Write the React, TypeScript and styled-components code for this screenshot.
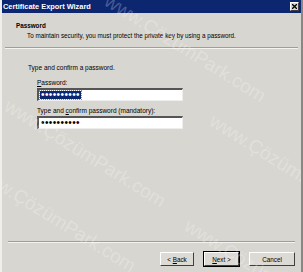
import styled, { createGlobalStyle } from "styled-components";

const GlobalStyle = createGlobalStyle`
  html, body {
    margin: 0;
    padding: 0;
    background: #d6d3ce;
  }
  body {
    font-family: "Liberation Sans", "DejaVu Sans", sans-serif;
  }
`;

const Window = styled.div`
  position: relative;
  width: 303px;
  height: 272px;
  box-sizing: border-box;
  display: flex;
  flex-direction: column;
  background: #d8d6d0;
  border-left: 2px solid #f0efec;
  border-right: 2px solid #8a8884;
  overflow: hidden;
  color: #000;
`;

const TitleBar = styled.div`
  height: 13px;
  display: flex;
  align-items: center;
  justify-content: space-between;
  padding: 0 2px 0 1px;
  background: #0c2670;
  color: #fff;
  font-weight: bold;
  font-size: 7.4px;
`;

const CloseButton = styled.div`
  width: 9px;
  height: 9px;
  box-sizing: border-box;
  display: flex;
  align-items: center;
  justify-content: center;
  background: #d8d6d0;
  border: 1px solid;
  border-color: #fff #404040 #404040 #fff;
`;

const Header = styled.div`
  height: 34px;
  padding: 9px 0 0 14px;
  box-sizing: border-box;
  font-size: 6.3px;
`;

const HeaderTitle = styled.div`
  font-weight: bold;
`;

const HeaderText = styled.div`
  margin: 3px 0 0 11px;
`;

const Separator = styled.div<{ $inset: number }>`
  margin: 0 ${(p) => p.$inset}px;
  border-top: 1px solid #a09e98;
  border-bottom: 1px solid #f4f3f0;
`;

const Body = styled.div`
  flex: 1;
  padding: 15px 0 0 26px;
  font-size: 6.5px;
`;

const Intro = styled.div`
  margin-bottom: 8px;
`;

const Field = styled.div`
  margin-left: 9px;
  margin-bottom: 6px;
`;

const Label = styled.div`
  margin-bottom: 2px;
  u {
    text-decoration: underline;
  }
`;

const Input = styled.div`
  width: 146px;
  height: 13px;
  box-sizing: border-box;
  background: #fff;
  border-top: 2px solid #555;
  border-left: 2px solid #555;
  border-right: 1px solid #eee;
  border-bottom: 1px solid #eee;
  display: flex;
  align-items: center;
  padding-left: 1px;
`;

const Dots = styled.span<{ $selected?: boolean }>`
  font-size: 10px;
  letter-spacing: 0.4px;
  line-height: 8px;
  padding: 0 1px;
  background: ${(p) => (p.$selected ? "#0c2670" : "transparent")};
  color: ${(p) => (p.$selected ? "#fff" : "#000")};
  outline: ${(p) => (p.$selected ? "1px dotted #888" : "none")};
`;

const Footer = styled.div`
  display: flex;
  justify-content: flex-end;
  gap: 10px;
  padding: 9px 6px 6px 0;
`;

const Button = styled.button<{ $default?: boolean; $w: number }>`
  width: ${(p) => p.$w}px;
  height: 14px;
  box-sizing: border-box;
  padding: 0;
  font-family: "Liberation Sans", "DejaVu Sans", sans-serif;
  font-size: 6.3px;
  color: #000;
  background: #dcdad5;
  border: 1px solid;
  border-color: #fff #404040 #404040 #fff;
  outline: ${(p) => (p.$default ? "1px solid #000" : "none")};
  outline-offset: 0;
  u {
    text-decoration: underline;
  }
`;

const Watermark = styled.div<{ $x: number; $y: number }>`
  position: absolute;
  left: ${(p) => p.$x}px;
  top: ${(p) => p.$y}px;
  transform: rotate(32deg);
  transform-origin: left top;
  font-size: 19px;
  white-space: nowrap;
  color: rgba(255, 255, 255, 0.25);
  pointer-events: none;
`;

export default function App() {
  return (
    <>
      <GlobalStyle />
      <Window>
        <TitleBar>
          <span>Certificate Export Wizard</span>
          <CloseButton>
            <svg width="5" height="5" viewBox="0 0 5 5">
              <path d="M0 0 L5 5 M5 0 L0 5" stroke="#000" strokeWidth="1.3" />
            </svg>
          </CloseButton>
        </TitleBar>
        <Header>
          <HeaderTitle>Password</HeaderTitle>
          <HeaderText>
            To maintain security, you must protect the private key by using a password.
          </HeaderText>
        </Header>
        <Separator $inset={3} />
        <Body>
          <Intro>Type and confirm a password.</Intro>
          <Field>
            <Label>
              <u>P</u>assword:
            </Label>
            <Input>
              <Dots $selected>••••••••••</Dots>
            </Input>
          </Field>
          <Field>
            <Label>
              Type and <u>c</u>onfirm password (mandatory):
            </Label>
            <Input>
              <Dots>••••••••••</Dots>
            </Input>
          </Field>
        </Body>
        <Separator $inset={6} />
        <Footer>
          <Button $w={34}>
            &lt; <u>B</u>ack
          </Button>
          <Button $w={35} $default>
            <u>N</u>ext &gt;
          </Button>
          <Button $w={46}>Cancel</Button>
        </Footer>
        <Watermark $x={110} $y={-10}>www.ÇözümPark.com</Watermark>
        <Watermark $x={10} $y={95}>www.ÇözümPark.com</Watermark>
        <Watermark $x={-20} $y={160}>www.ÇözümPark.com</Watermark>
        <Watermark $x={215} $y={110}>www.ÇözümPark.com</Watermark>
        <Watermark $x={190} $y={215}>www.ÇözümPark.com</Watermark>
      </Window>
    </>
  );
}
